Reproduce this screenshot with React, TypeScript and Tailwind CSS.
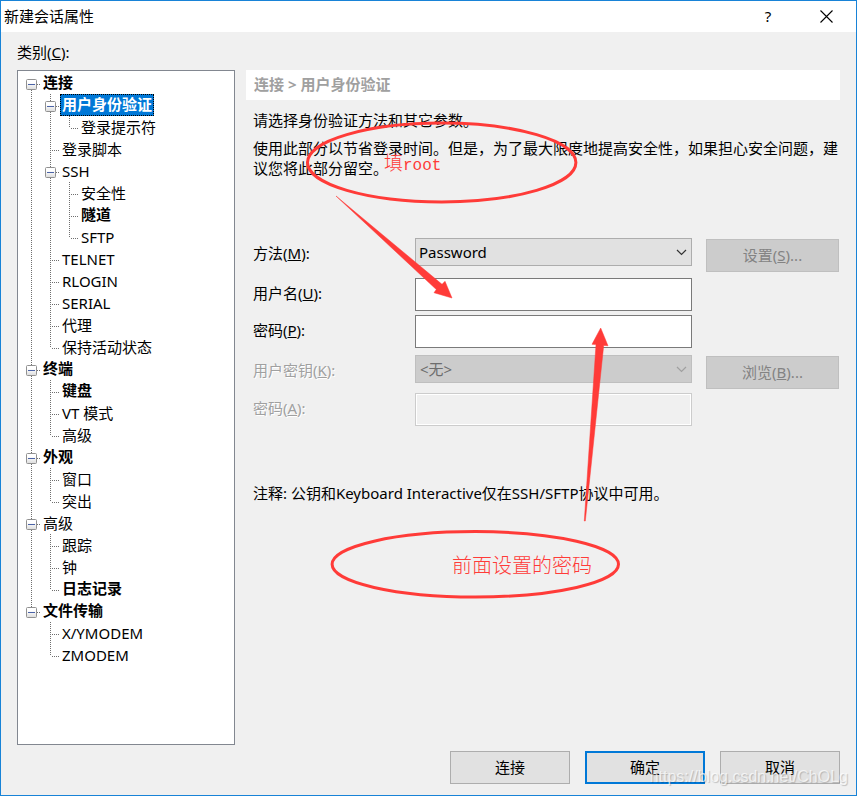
import { useState } from "react";

type TreeItem = {
  label: string;
  level: number;
  bold?: boolean;
  parent?: boolean;
};

const items: TreeItem[] = [
  { label: "连接", level: 0, bold: true, parent: true },
  { label: "用户身份验证", level: 1, bold: true, parent: true },
  { label: "登录提示符", level: 2 },
  { label: "登录脚本", level: 1 },
  { label: "SSH", level: 1, parent: true },
  { label: "安全性", level: 2 },
  { label: "隧道", level: 2, bold: true },
  { label: "SFTP", level: 2 },
  { label: "TELNET", level: 1 },
  { label: "RLOGIN", level: 1 },
  { label: "SERIAL", level: 1 },
  { label: "代理", level: 1 },
  { label: "保持活动状态", level: 1 },
  { label: "终端", level: 0, bold: true, parent: true },
  { label: "键盘", level: 1, bold: true },
  { label: "VT 模式", level: 1 },
  { label: "高级", level: 1 },
  { label: "外观", level: 0, bold: true, parent: true },
  { label: "窗口", level: 1 },
  { label: "突出", level: 1 },
  { label: "高级", level: 0, parent: true },
  { label: "跟踪", level: 1 },
  { label: "钟", level: 1 },
  { label: "日志记录", level: 1, bold: true },
  { label: "文件传输", level: 0, bold: true, parent: true },
  { label: "X/YMODEM", level: 1 },
  { label: "ZMODEM", level: 1 },
];

//is there another item on this level before the branch closes
function hasNext(index: number, level: number) {
  for (let i = index + 1; i < items.length; i++) {
    if (items[i].level < level) return false;
    if (items[i].level === level) return true;
  }
  return false;
}

type GuideProps = {
  up?: boolean;
  down?: boolean;
  branch?: boolean;
  toggle?: boolean;
};

//one 19px column of the dotted tree lines
function Guide({ up, down, branch, toggle }: GuideProps) {
  return (
    <svg width="19" height="22" className="shrink-0" aria-hidden="true">
      <g stroke="#6f6f6f" strokeDasharray="1 1" shapeRendering="crispEdges">
        {up && <path d="M9.5 0V12" />}
        {down && <path d="M9.5 12V22" />}
        {branch && <path d="M11 12.5H18" />}
      </g>
      {toggle && (
        <g>
          <rect x="4.5" y="7.5" width="10" height="10" rx="1" fill="url(#toggleFill)" stroke="#919191" />
          <path d="M6 12.5H13" stroke="#4b63a7" />
        </g>
      )}
    </svg>
  );
}

function Chevron({ color }: { color: string }) {
  return (
    <svg
      width="11"
      height="7"
      viewBox="0 0 11 7"
      className="absolute right-[5px] top-[11px] pointer-events-none"
      aria-hidden="true"
    >
      <path d="M1 1L5.5 5.5L10 1" fill="none" stroke={color} strokeWidth="1.2" />
    </svg>
  );
}

function Annotations() {
  return (
    <svg width="857" height="796" className="absolute -left-px -top-px pointer-events-none">
      <g fill="none" stroke="#ff3b38" strokeWidth="3">
        <ellipse cx="441.7" cy="162.5" rx="134.2" ry="39.4" />
        <ellipse cx="475.3" cy="564.3" rx="143.2" ry="32.7" />
      </g>
      <g fill="#ff3b38">
        <path d="M336 196L442 284.3L445 281.3L452 298L434 292.7L436.3 289.5Z" stroke="#ff3b38" strokeWidth="0.5" />
        <path
          d="M584.3 521L596 344.6L592 344.3L600.7 328L608 345.8L603.7 345.4L585.3 521Z"
          stroke="#ff3b38"
          strokeWidth="0.5"
        />
        <text x="384" y="170" fontSize="19" className="font-['Noto_Sans_CJK_SC',sans-serif] font-light">
          填
        </text>
        <text x="403" y="170" fontSize="16" className="font-['Liberation_Mono',monospace]">
          root
        </text>
        <text x="452" y="573" fontSize="20" className="font-['Noto_Sans_CJK_SC',sans-serif] font-light">
          前面设置的密码
        </text>
      </g>
    </svg>
  );
}

const buttonClass = "h-[33px] w-[120px] bg-[#e1e1e1] pb-0.5";
const disabledButton = "mt-px h-[33px] w-full bg-[#cccccc] border border-[#bfbfbf] pb-0.5 text-[#838383]";
const inputClass = "block h-[33px] w-full bg-white border border-[#7a7a7a] px-1 outline-none";
const disabledLabel = "leading-[30px] text-[#a0a0a0] [text-shadow:1px_1px_0_#fff]";

function App() {
  const [selected, setSelected] = useState(1);
  const [method, setMethod] = useState("Password");
  const [userName, setUserName] = useState("");
  const [password, setPassword] = useState("");

  return (
    <div className="relative min-h-screen flex flex-col bg-[#f0f0f0] border border-[#1883d7] text-black text-[15px] leading-5 font-['Noto_Sans','Noto_Sans_CJK_SC',sans-serif]">
      <svg width="0" height="0" className="absolute" aria-hidden="true">
        <linearGradient id="toggleFill" x1="0" y1="0" x2="0" y2="1">
          <stop offset="0.3" stopColor="#ffffff" />
          <stop offset="1" stopColor="#dcdcdc" />
        </linearGradient>
      </svg>

      {/* Title bar */}
      <header className="flex h-[31px] items-center bg-white pl-[3px]">
        <h1 className="flex-1 pb-0.5">新建会话属性</h1>
        <button type="button" aria-label="Help" className="w-14 h-full pb-0.5">
          ?
        </button>
        <button type="button" aria-label="Close" className="flex w-[60px] h-full items-center justify-center">
          <svg width="13" height="13" viewBox="0 0 13 13" aria-hidden="true">
            <path d="M0.5 0.5L12.5 12.5M12.5 0.5L0.5 12.5" stroke="#000" strokeWidth="1.1" />
          </svg>
        </button>
      </header>

      <main className="flex flex-1 flex-col px-4 pb-[11px]">
        <p className="h-[38px] pt-[10px]">
          类别(<u>C</u>):
        </p>

        <div className="flex flex-1 gap-[11px]">
          {/* Category tree */}
          <ul role="tree" className="w-[218px] shrink-0 bg-white border border-[#828790] pl-1 pt-px">
            {items.map((item, index) => (
              <li
                key={index}
                role="treeitem"
                aria-level={item.level + 1}
                aria-selected={index === selected}
                onClick={() => setSelected(index)}
                className="flex h-[22px]"
              >
                {item.level > 0 && <Guide up={hasNext(index, 0)} down={hasNext(index, 0)} />}
                {item.level > 1 && <Guide up={hasNext(index, 1)} down={hasNext(index, 1)} />}
                <Guide up={index > 0} down={hasNext(index, item.level)} branch toggle={item.parent} />
                <span
                  className={`px-[2px] whitespace-pre ${item.bold ? "font-bold leading-5" : "leading-[22px]"} ${
                    index === selected ? "bg-[#0078d7] text-white outline-1 -outline-offset-1 outline-dotted outline-black" : ""
                  }`}
                >
                  {item.label}
                </span>
              </li>
            ))}
          </ul>

          {/* Settings */}
          <section className="flex-1">
            <h2 className="h-[30px] bg-white pl-2 leading-7 font-bold text-[#a0a0a0]">
              连接 &gt; 用户身份验证
            </h2>

            <div className="pl-[7px] pr-px">
              <p className="mt-[10px]">请选择身份验证方法和其它参数。</p>
              <p className="mt-2 -mr-px">
                使用此部分以节省登录时间。但是，为了最大限度地提高安全性，如果担心安全问题，建议您将此部分留空。
              </p>

              <form
                onSubmit={(e) => e.preventDefault()}
                className="mt-[60px] grid grid-cols-[162px_1fr_147px] grid-rows-[40px_37px_40px_38px_33px] items-start"
              >
                {/* Method */}
                <label htmlFor="method" className="leading-[30px]">
                  方法(<u>M</u>):
                </label>
                <div className="relative">
                  <select
                    id="method"
                    value={method}
                    onChange={(e) => setMethod(e.target.value)}
                    className="block h-7 w-full appearance-none bg-[#e1e1e1] border border-[#adadad] pl-[3px]"
                  >
                    <option>Password</option>
                    <option>Public Key</option>
                  </select>
                  <Chevron color="#333333" />
                </div>
                <div className="pl-[14px]">
                  <button type="button" disabled className={disabledButton}>
                    设置(<u>S</u>)...
                  </button>
                </div>

                {/* User name */}
                <label htmlFor="userName" className="leading-[30px]">
                  用户名(<u>U</u>):
                </label>
                <input
                  id="userName"
                  type="text"
                  value={userName}
                  onChange={(e) => setUserName(e.target.value)}
                  className={inputClass}
                />
                <span />

                {/* Password */}
                <label htmlFor="password" className="leading-[30px]">
                  密码(<u>P</u>):
                </label>
                <input
                  id="password"
                  type="password"
                  value={password}
                  onChange={(e) => setPassword(e.target.value)}
                  className={inputClass}
                />
                <span />

                {/* User key */}
                <label htmlFor="userKey" className={disabledLabel}>
                  用户密钥(<u>K</u>):
                </label>
                <div className="relative">
                  <select
                    id="userKey"
                    disabled
                    className="block h-7 w-full appearance-none bg-[#cccccc] border border-[#bfbfbf] pl-1 text-[#6d6d6d] opacity-100"
                  >
                    <option>&lt;无&gt;</option>
                  </select>
                  <Chevron color="#a0a0a0" />
                </div>
                <div className="pl-[14px]">
                  <button type="button" disabled className={disabledButton}>
                    浏览(<u>B</u>)...
                  </button>
                </div>

                {/* Passphrase */}
                <label htmlFor="passphrase" className={disabledLabel}>
                  密码(<u>A</u>):
                </label>
                <input
                  id="passphrase"
                  type="password"
                  disabled
                  className="block h-[33px] w-full bg-[#f0f0f0] border border-[#cccccc] shadow-[inset_0_0_0_1px_#fff]"
                />
              </form>

              <p className="mt-[57px]">注释: 公钥和Keyboard Interactive仅在SSH/SFTP协议中可用。</p>
            </div>
          </section>
        </div>

        {/* Footer buttons */}
        <footer className="mt-[6px] flex justify-end gap-[15px]">
          <button type="button" className={`${buttonClass} border border-[#adadad]`}>
            连接
          </button>
          <button type="button" className={`${buttonClass} border-2 border-[#0078d7]`}>
            确定
          </button>
          <button type="button" className={`${buttonClass} border border-[#adadad]`}>
            取消
          </button>
        </footer>
      </main>

      <Annotations />

      <span className="absolute right-2 bottom-[6px] pointer-events-none font-['Liberation_Sans',sans-serif] text-base text-white/70 [text-shadow:1px_1px_1px_#00000033]">
        https://blog.csdn.net/ChOLg
      </span>
    </div>
  );
}

export default App;
